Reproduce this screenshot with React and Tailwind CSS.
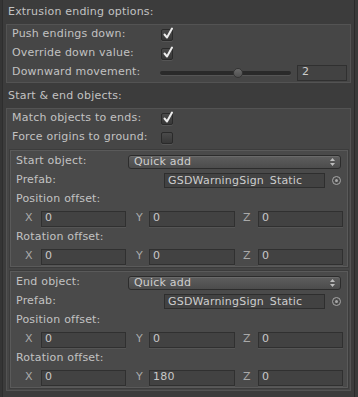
import React from "react";

const Check = ({ checked }) => (
  <div className="relative w-[12px] h-[12px] rounded-[2px] border border-[#2a2a2a] bg-gradient-to-b from-[#4a4a4a] to-[#383838] shadow-[0_1px_0_#555]">
    {checked && (
      <svg width="12" height="13" viewBox="0 0 12 13" className="absolute left-[0px] -top-[3px]">
        <path d="M2.5 7.5 L5 10.5 L10 1.5" stroke="#ececec" strokeWidth="2" fill="none" strokeLinecap="round" strokeLinejoin="round" />
      </svg>
    )}
  </div>
);

const Row = ({ children, className = "" }) => (
  <div className={"h-[19px] flex items-center " + className}>{children}</div>
);

const Field = ({ value, w }) => (
  <div className={"h-[16px] bg-[#424242] border border-[#303030] shadow-[0_1px_0_#555] flex items-center pl-[3px] text-[#c8c8c8] " + w}>
    {value}
  </div>
);

const XYZ = ({ x, y, z }) => (
  <Row className="pl-[14px]">
    <div className="w-[16px] text-[#a9a9a9]">X</div>
    <Field value={x} w="w-[85px]" />
    <div className="ml-[10px] w-[13px] text-[#a9a9a9]">Y</div>
    <Field value={y} w="w-[86px]" />
    <div className="ml-[8px] w-[15px] text-[#a9a9a9]">Z</div>
    <Field value={z} w="w-[85px]" />
  </Row>
);

const ObjBox = ({ label, ry }) => (
  <div className="ml-[3px] mr-[2px] bg-[#4a4a4a] border border-[#5a5a5a] shadow-[0_0_0_1px_#3c3c3c] pt-[1px]">
    <Row className="pl-[5px]">
      <div className="w-[112px]">{label}</div>
      <div className="w-[213px] h-[14px] rounded-[3px] border border-[#2c2c2c] bg-gradient-to-b from-[#5e5e5e] to-[#4c4c4c] shadow-[inset_0_1px_0_#6a6a6a] flex items-center pl-[5px] pr-[5px] text-[#cfcfcf]">
        <span className="flex-1 leading-[12px]">Quick add</span>
        <svg width="5" height="8" viewBox="0 0 5 8">
          <path d="M0 3 L2.5 0 L5 3 Z" fill="#bdbdbd" />
          <path d="M0 5 L2.5 8 L5 5 Z" fill="#bdbdbd" />
        </svg>
      </div>
    </Row>
    <Row className="pl-[5px]">
      <div className="w-[148px]">Prefab:</div>
      <div className="w-[161px] h-[15px] bg-[#424242] border border-[#2e2e2e] pl-[3px] overflow-hidden text-[#cdcdcd]">
        <div className="h-[12px] overflow-hidden leading-[13px] whitespace-nowrap">GSDWarningSign_Static</div>
      </div>
      <div className="ml-[7px] w-[9px] h-[9px] rounded-full border border-[#a8a8a8] flex items-center justify-center">
        <div className="w-[3px] h-[3px] rounded-full bg-[#a8a8a8]" />
      </div>
    </Row>
    <Row className="pl-[5px]">Position offset:</Row>
    <XYZ x="0" y="0" z="0" />
    <Row className="pl-[5px]">Rotation offset:</Row>
    <XYZ x="0" y={ry} z="0" />
  </div>
);

export default function App() {
  return (
    <div className="w-[358px] h-[397px] overflow-hidden bg-[#3c3c3c] flex font-['DejaVu_Sans',sans-serif] text-[11px] tracking-[0.2px] text-[#c2c2c2]">
      <div className="w-[2px] bg-[#353535]" />
      <div className="w-[1px] bg-[#2e2e2e]" />
      <div className="flex-1 flex flex-col">
        <div className="mt-[2px] h-[20px] flex items-center pl-[5px]">Extrusion ending options:</div>
        <div className="mt-[2px] mx-[3px] bg-[#464646] border border-[#535353]">
          <Row className="pl-[5px]">
            <div className="w-[149px]">Push endings down:</div>
            <Check checked />
          </Row>
          <Row className="pl-[5px]">
            <div className="w-[149px]">Override down value:</div>
            <Check checked />
          </Row>
          <Row className="pl-[5px]">
            <div className="w-[148px]">Downward movement:</div>
            <div className="relative w-[131px] h-[12px] flex items-center">
              <div className="w-full h-[4px] rounded-full bg-[#2a2a2a] shadow-[0_1px_0_#555]" />
              <div className="absolute left-[73px] top-[1px] w-[10px] h-[10px] rounded-full bg-gradient-to-b from-[#6a6a6a] to-[#505050] border border-[#343434]" />
            </div>
            <div className="ml-[6px] w-[50px] h-[16px] bg-[#424242] border border-[#303030] pl-[4px] flex items-center text-[#cdcdcd]">2</div>
          </Row>
        </div>
        <div className="mt-[3px] h-[20px] flex items-center pl-[5px]">Start &amp; end objects:</div>
        <div className="mt-[2px] mx-[3px] bg-[#464646] border border-[#535353] pb-[2px]">
          <Row className="pl-[5px]">
            <div className="w-[149px]">Match objects to ends:</div>
            <Check checked />
          </Row>
          <Row className="pl-[5px]">
            <div className="w-[149px]">Force origins to ground:</div>
            <Check />
          </Row>
          <div className="mt-[3px]">
            <ObjBox label="Start object:" ry="0" />
          </div>
          <div className="mt-[4px]">
            <ObjBox label="End object:" ry="180" />
          </div>
        </div>
      </div>
      <div className="w-[1px] bg-[#2a2a2a]" />
      <div className="w-[3px] bg-[#3a3a3a]" />
    </div>
  );
}
